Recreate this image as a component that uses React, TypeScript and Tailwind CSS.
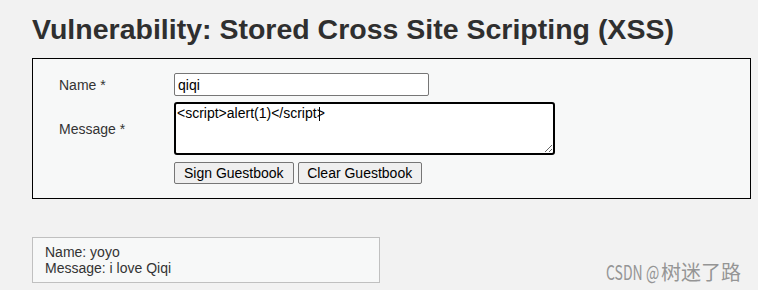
import React from "react";

export default function App() {
  const font = { fontFamily: '"Liberation Sans", Arial, sans-serif' };
  return (
    <div
      className="relative w-[758px] h-[290px] overflow-hidden bg-[#f2f2f2] text-[#333]"
      style={font}
    >
      <div className="pl-[32px] pt-[13px]">
        <h1 className="text-[28.5px] leading-[33px] font-bold text-[#2f2f2f] whitespace-nowrap">
          Vulnerability: Stored Cross Site Scripting (XSS)
        </h1>

        <div className="mt-[12px] w-[719px] h-[141px] border border-black bg-[#f7f8f8] pl-[26px] pt-[14px]">
          <div className="flex flex-col gap-[6px]">
            <div className="flex items-center">
              <div className="w-[115px] text-[14px] leading-[16px] text-[#333]">Name *</div>
              <input
                className="w-[255px] h-[23px] border border-[#767676] rounded-[2px] bg-white px-[3px] text-[14px] text-black outline-none"
                style={font}
                defaultValue="qiqi"
              />
            </div>
            <div className="flex items-center">
              <div className="w-[115px] text-[14px] leading-[16px] text-[#333]">Message *</div>
              <textarea
                className="w-[381px] h-[53px] border-2 border-black rounded-[3px] bg-white px-[1px] py-[1px] text-[14px] leading-[16px] text-black outline-none resize"
                style={font}
                defaultValue="<script>alert(1)</script>"
              />
            </div>
          </div>
          <div className="flex gap-[4px] pl-[115px] mt-[7px]">
            <button className="h-[22px] px-[9px] border border-[#767676] rounded-[2px] bg-[#efefef] text-[14px] leading-[16px] text-black">
              Sign Guestbook
            </button>
            <button className="h-[22px] px-[8.5px] border border-[#767676] rounded-[2px] bg-[#efefef] text-[14px] leading-[16px] text-black">
              Clear Guestbook
            </button>
          </div>
        </div>

        <div className="mt-[38px] w-[348px] h-[46px] border border-[#c0c0c0] bg-[#f7f8f8] pl-[12px] pt-[6px] text-[14px] leading-[16px] text-[#333]">
          <div>Name: yoyo</div>
          <div>Message: i love Qiqi</div>
        </div>
      </div>

      {/* text caret in the textarea */}
      <div className="absolute left-[319px] top-[107px] w-[1px] h-[14px] bg-black" />

      <div
        className="absolute left-[606px] top-[262px] flex items-center text-[20px] leading-[20px] text-[#959595] whitespace-nowrap"
        style={{ fontFamily: '"Noto Sans CJK SC", "Noto Sans", sans-serif' }}
      >
        <span className="inline-block w-[40px] overflow-visible origin-left scale-x-[0.7]">CSDN</span>
        <span className="inline-block w-[15px] overflow-visible origin-left scale-x-[0.7]">@</span>
        <span>树迷了路</span>
      </div>
    </div>
  );
}
